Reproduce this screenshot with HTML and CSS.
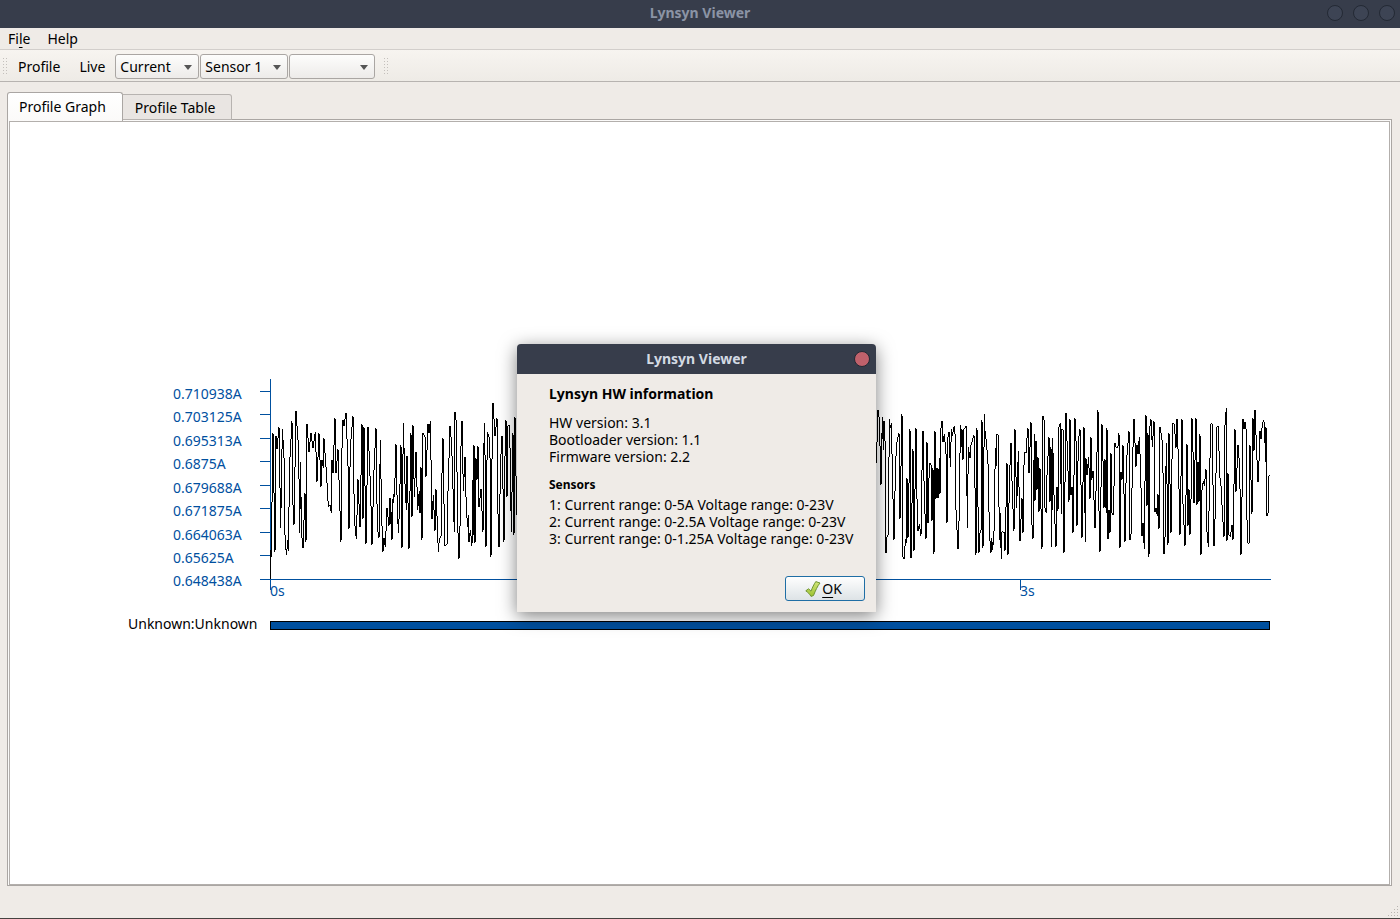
FILE: index.html
```html
<!DOCTYPE html>
<html lang="en">
<head>
<meta charset="utf-8">
<title>Lynsyn Viewer</title>
<link rel="stylesheet" href="styles.css">
</head>
<body>
<div class="app">
  <header class="titlebar">
    <h1 class="title">Lynsyn Viewer</h1>
    <div class="window-buttons">
      <button class="round" aria-label="Minimize"></button>
      <button class="round" aria-label="Maximize"></button>
      <button class="round" aria-label="Close"></button>
    </div>
  </header>
  <nav class="menubar">
    <button class="menu">Fi<span class="key">l</span>e</button>
    <button class="menu">Help</button>
  </nav>
  <div class="toolbar">
    <svg class="grip" width="6" height="18" viewBox="0 0 6 18" aria-hidden="true">
      <path d="M.5 1V18M3.500 1V18"/>
    </svg>
    <button class="tool tool-profile">Profile</button>
    <button class="tool tool-live">Live</button>
    <span class="combo combo-current"><select aria-label="Measurement"><option>Current</option></select></span>
    <span class="combo combo-sensor"><select aria-label="Sensor"><option>Sensor 1</option></select></span>
    <span class="combo combo-core"><select aria-label="Core"><option></option></select></span>
    <svg class="grip grip-end" width="6" height="18" viewBox="0 0 6 18" aria-hidden="true">
      <path d="M.5 1V18M3.500 1V18"/>
    </svg>
  </div>
  <main class="content">
    <div class="tabs" role="tablist">
      <button class="tab active" role="tab" aria-selected="true">Profile Graph</button>
      <button class="tab" role="tab" aria-selected="false">Profile Table</button>
    </div>
    <section class="pane">
      <div class="view">
        <svg class="chart" viewBox="10 122 1379 762" role="img" aria-label="Current over time">
          <path class="axis" d="M270.5 379V590M260 579.5H1271M1020.5 579V590M260 391.5H270M260 414.5H270M260 438.5H270M260 461.5H270M260 485.5H270M260 508.5H270M260 532.5H270M260 555.5H270"/>
          <path class="trace" d="M270.5 550V579"/>
          <g class="label">
            <text x="173" y="399">0.710938A</text>
            <text x="173" y="422">0.703125A</text>
            <text x="173" y="446">0.695313A</text>
            <text x="173" y="469">0.6875A</text>
            <text x="173" y="493">0.679688A</text>
            <text x="173" y="516">0.671875A</text>
            <text x="173" y="540">0.664063A</text>
            <text x="173" y="563">0.65625A</text>
            <text x="173" y="586">0.648438A</text>
            <text x="270" y="596">0s</text>
            <text x="1020" y="596">3s</text>
          </g>
          <g class="trace">
            <polyline transform="translate(265 395) scale(.33333)" points="17,505 19,465 24,115 30,470 33,122 36,162 42,97 47,400 52,103 57,185 59,405 64,480 69,435 70,468 74,205 81,78 83,310 87,390 93,47 101,165 104,415 107,200 109,408 114,460 120,295 123,440 126,87 132,170 138,115 144,160 151,110 156,260 162,115 168,275 171,195 175,220 177,130 184,230 190,335 195,330 199,355 201,195 204,235 210,68 213,235 219,163 228,440 231,160 234,75 237,92 243,53 249,210 252,402 256,155 264,62 268,375 274,432 279,253 285,397 291,87 294,372 297,97 303,447 309,95 317,290 321,450 327,225 333,98 337,400 342,430 346,135 350,365 354,470 357,430 361,455 366,340 372,392 375,310 380,435 384,325 390,285"/>
            <polyline transform="translate(390 395) scale(.33333)" points="0,310 3,350 6,435 9,312 14,285 18,147 21,300 25,415 28,350 33,150 36,460 40,85 45,265 49,345 51,182 57,463 63,115 66,367 69,90 73,305 78,170 83,345 88,287 90,355 93,215 96,435 99,115 105,125 108,245 114,87 117,115 121,77 126,372 130,300 135,408 138,283 145,472 148,430 153,425 156,235 159,130 164,453 171,448 174,290 180,92 185,150 190,315 193,412 195,50 200,93 202,360 207,492 211,362 213,155 216,77 220,288 225,185 229,345 233,395 235,360 237,440 241,405 246,452 247,255 250,420 252,150 255,445 258,190 261,255 264,152 267,335 273,282 279,410 281,175 284,85 288,457 292,110 297,125 300,185 303,485 306,195 309,23 315,122 321,68 324,355 327,457 332,195 336,122 342,440 345,185 348,75 351,305 354,92 359,92 364,410 369,115 372,420 375,65 380,360 386,120"/>
            <polyline transform="translate(870 395) scale(.33333)" points="19,205 24,45 28,72 33,270 37,65 40,165 42,78 47,178 48,475 51,425 55,420 58,73 61,100 64,83 68,270 72,435 75,290 79,150 87,113 90,372 96,57 99,487 103,493 106,432 109,445 111,250 114,430 120,103 123,490 129,163 132,467 138,100 141,310 144,408 148,387 153,422 155,265 159,107 163,307 168,432 171,140 174,385 178,205 183,207 186,378 189,220 192,477 195,107 197,312 199,220 201,310 204,220 206,310 208,190 210,297 212,107 216,77 219,142 223,118 228,175 231,385 234,125 237,110 241,215 244,103 247,122 253,92 256,130 258,345 264,463 268,350 271,90 274,155 276,103 279,195 281,103 289,93 292,400 295,157 300,190 303,150 312,120 315,275 318,480 321,100 323,290 327,473 330,415 334,400 336,75 339,458 343,57 345,107 350,150 355,220 358,412 363,473 365,430 368,465 372,412 376,160 378,215 381,118 385,120 388,435 391,355 394,492 396,410"/>
            <polyline transform="translate(1000 395) scale(.33333)" points="0,355 4,492 6,410 13,412 15,468 21,203 24,480 27,325 29,235 33,143 37,295 42,408 45,103 50,340 55,167 60,438 66,310 69,415 72,210 74,172 79,175 81,130 84,100 87,235 93,80 96,390 99,432 103,118 105,318 108,137 111,285 114,187 117,350 120,220 126,463 129,63 132,70 135,338 139,355 141,240 147,125 150,322 153,155 155,457 158,130 163,340 168,457 171,275 174,348 176,100 181,83 184,357 186,103 190,105 192,473 198,53 202,165 207,320 210,72 213,300 216,275 219,415 225,70 228,135 231,393 235,135 240,103 246,430 252,95 256,440 258,190 261,240 266,185 270,312 273,125 275,255 279,228 285,400 290,215 294,45 297,345 300,470 306,87 309,197 312,338 314,192 316,340 318,195 319,355 321,100 324,432 327,345 330,415 333,175 336,355 340,360 345,143 349,160 354,155 357,115 360,460 363,230 366,255 369,150 375,440 379,205 387,107 390,435 394,410 397,215 402,72 408,215"/>
            <polyline transform="translate(1135 395) scale(.33333)" points="3,215 6,150 9,178 13,125 17,230 21,423 24,383 28,463 30,262 33,60 36,333 39,115 42,485 44,100 48,73 52,155 57,77 60,350 63,338 67,363 69,298 72,403 75,95 79,120 83,150 87,477 90,428 94,143 99,450 102,115 108,415 111,195 114,83 118,87 123,158 126,72 130,190 135,420 141,72 144,325 150,453 156,147 159,392 162,283 165,420 168,315 171,70 174,170 177,325 183,68 186,330 189,200 192,322 195,117 198,480 201,285 205,257 208,273 213,222 215,398 220,457 223,295 227,87 231,83 237,453 240,375 246,95 250,92 254,240 258,273 262,350 267,427 270,90 274,38 276,437 279,235 282,420 286,425 291,390 294,435 300,103 303,290 309,150 314,215 318,480 321,310 324,72 327,103 330,80 334,108 335,350 339,445 343,445 345,150 351,357 354,70 357,168 360,45 365,170 369,262 372,200 375,107 378,132 381,100 385,75 389,85 391,200 393,95 396,363 400,350 401,242 405,240"/>
          </g>
          <text class="thread" x="128" y="629">Unknown:Unknown</text>
          <rect class="bar" x="270.5" y="621.5" width="999" height="8"/>
        </svg>
      </div>
    </section>
  </main>
  <footer class="statusbar">
    <svg class="sizegrip" width="12" height="12" viewBox="0 0 12 12" aria-hidden="true">
      <path d="M9 0h1v1h-1zM6 3h1v1h-1zM9 3h1v1h-1zM3 6h1v1h-1zM6 6h1v1h-1zM9 6h1v1h-1zM0 9h1v1h-1zM3 9h1v1h-1zM6 9h1v1h-1zM9 9h1v1h-1z"/>
    </svg>
  </footer>

  <div class="dialog" role="dialog" aria-labelledby="dialog-title">
    <header class="dialog-bar">
      <h2 class="title" id="dialog-title">Lynsyn Viewer</h2>
      <button class="round close" aria-label="Close dialog"></button>
    </header>
    <div class="dialog-body">
      <h3 class="heading">Lynsyn HW information</h3>
      <p class="info">HW version: 3.1<br>Bootloader version: 1.1<br>Firmware version: 2.2</p>
      <h4 class="subheading">Sensors</h4>
      <p class="info">1: Current range: 0-5A Voltage range: 0-23V<br>2: Current range: 0-2.5A Voltage range: 0-23V<br>3: Current range: 0-1.25A Voltage range: 0-23V</p>
      <div class="actions">
        <button class="ok">
          <svg width="16" height="16" viewBox="0 0 16 16" aria-hidden="true">
            <defs><linearGradient id="leaf" x1="0" y1="0" x2="0" y2="1"><stop offset="0" stop-color="#d3e67c"/><stop offset="1" stop-color="#9cc22e"/></linearGradient></defs>
            <path d="M.8 9.800 3.600 7.800 6 10.200C7.400 6.500 9 3.200 10.800.6L15 2C12.500 5 10.500 9.500 8.500 14.500L6 15.400C4.700 13 3 11.500.8 9.800Z" fill="url(#leaf)" stroke="#6f9433" stroke-linejoin="round"/>
          </svg>
          <span><span class="key">O</span>K</span>
        </button>
      </div>
    </div>
  </div>
</div>
</body>
</html>
```
FILE: styles.css
```css
* { box-sizing: border-box; }

body {
  margin: 0;
  background: #efebe7;
  color: #000;
  font: 14px/17px "Noto Sans", "Open Sans", sans-serif;
}

button, select {
  margin: 0;
  padding: 0;
  border: 0;
  background: none;
  color: inherit;
  font: inherit;
}

h1, h2, h3, h4, p { margin: 0; }

.key {
  text-decoration: underline;
  text-decoration-thickness: 1px;
  text-underline-offset: 3px;
}

.app {
  position: relative;
  display: flex;
  flex-direction: column;
  min-height: 100vh;
}

.titlebar {
  display: grid;
  grid-template-columns: 1fr auto 1fr;
  align-items: center;
  height: 28px;
  padding-bottom: 2px;
  background: #373d4b;
  color: #8b94a5;
}

.title {
  grid-column: 2;
  font-size: 14px;
  line-height: 20px;
  font-weight: 700;
}

.window-buttons {
  display: flex;
  justify-content: flex-end;
  gap: 10px;
  padding-right: 5px;
}

.round {
  width: 16px;
  height: 16px;
  border: 1px solid #232934;
  border-radius: 50%;
  background: #3d4454;
}

.menubar {
  display: flex;
  gap: 17px;
  height: 22px;
  padding: 0 8px;
  border-bottom: 1px solid #d2cecb;
}

.toolbar {
  display: flex;
  align-items: center;
  height: 32px;
  padding: 1px 3px 0;
  border-bottom: 1px solid #b7b3b0;
  background: linear-gradient(#f7f4f0, #eeebe6);
}

.grip path {
  stroke: #c4c0bc;
  stroke-dasharray: 1 2;
  shape-rendering: crispEdges;
}

.grip-end { margin-left: 8px; }
.tool-profile { margin-left: 9px; }
.tool-live { margin: 0 10px 0 19px; }

.combo {
  position: relative;
  height: 25px;
  margin-right: 1px;
  border: 1px solid #aaa6a3;
  border-radius: 3px;
  background: linear-gradient(#fdfdfc, #edebe9);
}

.combo::after {
  content: "";
  position: absolute;
  top: 10px;
  right: 6px;
  border: 4px solid transparent;
  border-top: 5px solid #555;
  border-bottom: 0;
  pointer-events: none;
}

.combo select {
  width: 100%;
  height: 23px;
  padding: 0 4px;
  appearance: none;
}

.combo-current { width: 84px; }
.combo-sensor { width: 88px; }
.combo-core { width: 86px; }

.content {
  display: flex;
  flex: 1;
  flex-direction: column;
  padding: 10px 8px 0 7px;
}

.tabs {
  position: relative;
  display: flex;
  align-items: flex-end;
  height: 28px;
}

.tab {
  height: 26px;
  padding: 0 16px 0 12px;
  border: 1px solid #b7b3b0;
  border-left: 0;
  border-radius: 0 3px 0 0;
  background: #e9e5e2;
}

.tab.active {
  height: 29px;
  margin-bottom: -1px;
  padding: 0 16px 2px 11px;
  border: 1px solid #aaa6a3;
  border-bottom: 0;
  border-radius: 3px 3px 0 0;
  background: linear-gradient(#fff, #fbfaf9);
  z-index: 1;
}

.pane {
  display: flex;
  flex: 1;
  margin-top: -1px;
  padding: 1px 1px 0;
  border: 1px solid #aaa6a3;
  background: #fbfaf9;
}

.view {
  display: flex;
  flex: 1;
  border: 1px solid #b3afac;
  background: #fff;
}

.chart {
  flex: 1;
  width: 100%;
  min-width: 0;
}

.axis, .trace, .bar { shape-rendering: crispEdges; }
.axis { fill: none; stroke: #00509f; }
.trace { fill: none; stroke: #000; }
.trace polyline { stroke-width: 3; }
.label { fill: #00509f; }
.bar { fill: #00509f; stroke: #000; }

.statusbar {
  display: flex;
  align-items: flex-end;
  justify-content: flex-end;
  height: 33px;
  border-bottom: 1px solid #454240;
}

.sizegrip { fill: #b9b5b1; }

/* Floating message window */
.dialog {
  position: absolute;
  top: 344px;
  left: 517px;
  min-width: 359px;
  border-radius: 4px 4px 0 0;
  background: #efebe7;
  box-shadow: 0 4px 18px rgba(0, 0, 0, .5);
}

.dialog-bar {
  display: grid;
  grid-template-columns: 1fr auto 1fr;
  align-items: center;
  height: 30px;
  padding: 0 6px;
  border-radius: 4px 4px 0 0;
  background: #373d4b;
  color: #d3dae3;
}

.close {
  grid-column: 3;
  justify-self: end;
  background: #c0616b;
}

.dialog-body { padding: 11px 11px 11px 32px; }

.heading {
  margin-bottom: 12px;
  font-size: 14px;
  line-height: 17px;
}

.subheading {
  margin: 12px 0 4px;
  font-size: 12px;
  line-height: 15px;
}

.actions {
  display: flex;
  justify-content: flex-end;
  margin-top: 29px;
}

.ok {
  display: flex;
  align-items: center;
  justify-content: center;
  gap: 1px;
  width: 80px;
  height: 25px;
  padding-right: 3px;
  border: 1px solid #1f6ea5;
  border-radius: 3px;
  background: linear-gradient(#fefefe, #dde3e6);
}
```
